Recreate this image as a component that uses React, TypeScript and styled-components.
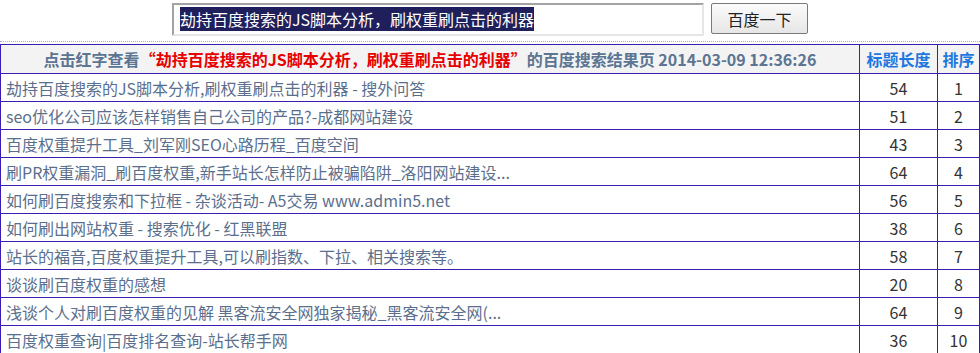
import styled, { createGlobalStyle } from "styled-components";

const GlobalStyle = createGlobalStyle`
  html, body {
    margin: 0;
    padding: 0;
    background: #fff;
  }
  body {
    font-family: "Noto Sans CJK SC", "Noto Sans", sans-serif;
  }
`;

const SearchForm = styled.form`
  display: flex;
  justify-content: center;
  align-items: flex-start;
  gap: 7px;
  height: 42px;
  padding-top: 3px;
  box-sizing: border-box;
  border-bottom: 1px dotted #b3a8ee;
  margin-bottom: 2px;
`;

const SearchInput = styled.div`
  width: 532px;
  height: 33px;
  box-sizing: border-box;
  border: 2px solid #e6e6e6;
  border-top-color: #a3a3a3;
  border-left-color: #a3a3a3;
  padding: 3px 0 0 6px;
  font-size: 16px;
  line-height: 22px;
  color: #111;
  white-space: nowrap;
  overflow: hidden;
`;

const Selected = styled.span`
  background: #1f1f5c;
  color: #fff;
`;

const SearchButton = styled.button`
  width: 97px;
  height: 31px;
  border: 1px solid #7a7a7a;
  border-radius: 2px;
  background: linear-gradient(#fbfbfb, #e6e6e6);
  font-family: "Noto Sans CJK SC", sans-serif;
  font-size: 16px;
  color: #222;
  padding: 0;
`;

const Table = styled.table`
  width: 980px;
  border-collapse: collapse;
  table-layout: fixed;
  font-size: 16px;
`;

const HeadCell = styled.th<{ $blue?: boolean }>`
  height: 28px;
  padding: 0;
  border: 1px solid #3b1db4;
  background: #f3f3f3;
  font-weight: bold;
  color: ${(p) => (p.$blue ? "#1f78e0" : "#5b7593")};
  text-align: center;
  white-space: nowrap;
`;

const Red = styled.span`
  color: #e60000;
`;

const TitleCell = styled.td`
  height: 27px;
  padding: 0 0 0 5px;
  border: 1px solid #3b1db4;
  color: #5b6f8d;
  white-space: nowrap;
  overflow: hidden;
`;

const NumCell = styled.td`
  height: 27px;
  padding: 0;
  border: 1px solid #3b1db4;
  color: #333;
  text-align: center;
`;

const rows: [string, number][] = [
  ["劫持百度搜索的JS脚本分析,刷权重刷点击的利器 - 搜外问答", 54],
  ["seo优化公司应该怎样销售自己公司的产品?-成都网站建设", 51],
  ["百度权重提升工具_刘军刚SEO心路历程_百度空间", 43],
  ["刷PR权重漏洞_刷百度权重,新手站长怎样防止被骗陷阱_洛阳网站建设...", 64],
  ["如何刷百度搜索和下拉框 - 杂谈活动- A5交易 www.admin5.net", 56],
  ["如何刷出网站权重 - 搜索优化 - 红黑联盟", 38],
  ["站长的福音,百度权重提升工具,可以刷指数、下拉、相关搜索等。", 58],
  ["谈谈刷百度权重的感想", 20],
  ["浅谈个人对刷百度权重的见解 黑客流安全网独家揭秘_黑客流安全网(...", 64],
  ["百度权重查询|百度排名查询-站长帮手网", 36],
];

export default function App() {
  return (
    <>
      <GlobalStyle />
      <SearchForm onSubmit={(e) => e.preventDefault()}>
        <SearchInput>
          <Selected>劫持百度搜索的JS脚本分析，刷权重刷点击的利器</Selected>
        </SearchInput>
        <SearchButton type="submit">百度一下</SearchButton>
      </SearchForm>
      <Table>
        <colgroup>
          <col style={{ width: 859 }} />
          <col style={{ width: 78 }} />
          <col />
        </colgroup>
        <thead>
          <tr>
            <HeadCell>
              点击红字查看<Red>“劫持百度搜索的JS脚本分析，刷权重刷点击的利器”</Red>的百度搜索结果页 2014-03-09 12:36:26
            </HeadCell>
            <HeadCell $blue>标题长度</HeadCell>
            <HeadCell $blue>排序</HeadCell>
          </tr>
        </thead>
        <tbody>
          {rows.map(([title, len], i) => (
            <tr key={i}>
              <TitleCell>{title}</TitleCell>
              <NumCell>{len}</NumCell>
              <NumCell>{i + 1}</NumCell>
            </tr>
          ))}
        </tbody>
      </Table>
    </>
  );
}
